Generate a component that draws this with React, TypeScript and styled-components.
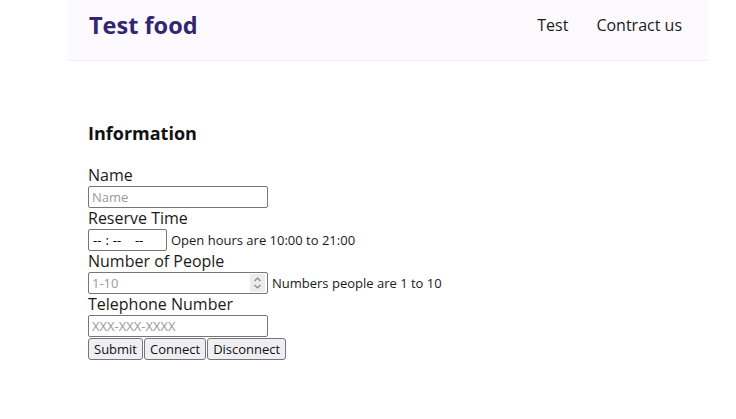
import React from "react";
import styled, { createGlobalStyle } from "styled-components";

const Global = createGlobalStyle`
  html, body { margin: 0; padding: 0; background: #fff; }
  body { font-family: "Open Sans", "Lato", sans-serif; color: #111; }
  input[type="time"]::-webkit-calendar-picker-indicator { display: none; }
  input[type="time"]::-webkit-datetime-edit-text { padding: 0 3px; }
  input[type="time"]::-webkit-datetime-edit-ampm-field { margin-left: 4px; }
`;

const Page = styled.div`
  padding-left: 68px;
  width: 640px;
`;

const Header = styled.header`
  height: 60px;
  display: flex;
  align-items: center;
  justify-content: space-between;
  padding: 0 26px 0 21px;
  background: #fcfaff;
  border-bottom: 1px solid #ecebef;
`;

const Brand = styled.div`
  font-size: 23.5px;
  font-weight: 700;
  color: #31266f;
  margin-top: -10px;
`;

const Nav = styled.nav`
  display: flex;
  gap: 28px;
  margin-top: -10px;
`;

const NavLink = styled.a`
  font-size: 16px;
  color: #1a1a1a;
  text-decoration: none;
`;

const Main = styled.main`
  padding: 60px 20px 0 20px;
`;

const Heading = styled.h3`
  margin: 0 0 20px 0;
  font-size: 18px;
  line-height: 24px;
  font-weight: 700;
`;

const Form = styled.form`
  display: flex;
  flex-direction: column;
  align-items: flex-start;
`;

const Label = styled.label`
  display: block;
  height: 21px;
  font-size: 16px;
  line-height: 20px;
  color: #1a1a1a;
`;

const Row = styled.div`
  display: flex;
  align-items: center;
  gap: 4px;
  height: 22px;
`;

const Field = styled.div`
  position: relative;
  height: 22px;
`;

const Input = styled.input<{ $w: number }>`
  display: block;
  box-sizing: border-box;
  width: ${(p) => p.$w}px;
  height: 22px;
  margin: 0;
  padding: 1px 3px;
  font-family: "Open Sans", sans-serif;
  font-size: 13px;
  border: 1px solid #767676;
  border-radius: 2px;
  background: #fff;
  &::placeholder { color: #9a9a9a; }
  &::-webkit-inner-spin-button { opacity: 0; }
`;

const Spinner = styled.div`
  position: absolute;
  right: 3px;
  top: 2px;
  width: 15px;
  height: 18px;
  background: #ececec;
  display: flex;
  align-items: center;
  justify-content: center;
  pointer-events: none;
`;

const Hint = styled.span`
  font-size: 13px;
  color: #1a1a1a;
`;

const Buttons = styled.div`
  display: flex;
  gap: 1px;
  margin-top: 1px;
`;

const Button = styled.button`
  height: 22px;
  padding: 1px 5px;
  font-family: "Open Sans", sans-serif;
  font-size: 13px;
  color: #111;
  background: #efeff3;
  border: 1px solid #767676;
  border-radius: 3px;
`;

export default function App() {
  return (
    <>
      <Global />
      <Page>
        <Header>
          <Brand>Test food</Brand>
          <Nav>
            <NavLink href="#">Test</NavLink>
            <NavLink href="#">Contract us</NavLink>
          </Nav>
        </Header>
        <Main>
          <Heading>Information</Heading>
          <Form onSubmit={(e) => e.preventDefault()}>
            <Label htmlFor="name">Name</Label>
            <Input id="name" $w={180} type="text" placeholder="Name" />
            <Label htmlFor="time">Reserve Time</Label>
            <Row>
              <Input id="time" $w={79} type="time" />
              <Hint>Open hours are 10:00 to 21:00</Hint>
            </Row>
            <Label htmlFor="people">Number of People</Label>
            <Row>
              <Field>
                <Input id="people" $w={180} type="number" placeholder="1-10" min={1} max={10} />
                <Spinner>
                  <svg width="9" height="14" viewBox="0 0 9 14" fill="none" stroke="#8a8a8a" strokeWidth="1.2">
                    <path d="M1.5 5 L4.5 2 L7.5 5" />
                    <path d="M1.5 9 L4.5 12 L7.5 9" />
                  </svg>
                </Spinner>
              </Field>
              <Hint>Numbers people are 1 to 10</Hint>
            </Row>
            <Label htmlFor="tel">Telephone Number</Label>
            <Input id="tel" $w={180} type="tel" placeholder="XXX-XXX-XXXX" />
            <Buttons>
              <Button type="submit">Submit</Button>
              <Button type="button">Connect</Button>
              <Button type="button">Disconnect</Button>
            </Buttons>
          </Form>
        </Main>
      </Page>
    </>
  );
}
